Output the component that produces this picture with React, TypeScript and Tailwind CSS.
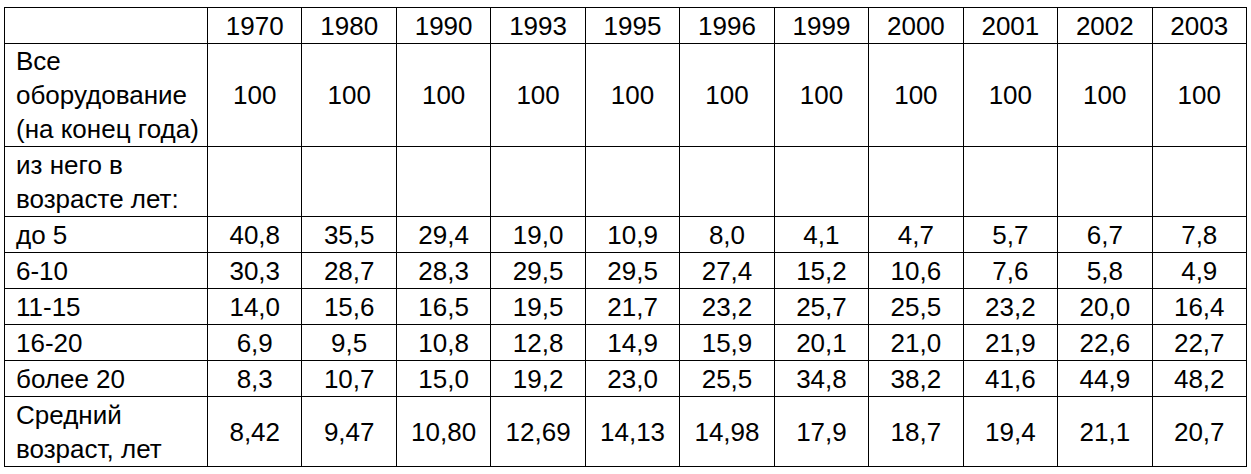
const years = ["1970", "1980", "1990", "1993", "1995", "1996", "1999", "2000", "2001", "2002", "2003"];

const rows: { label: string[]; values: string[]; h: string }[] = [
  { label: ["Все", "оборудование", "(на конец года)"], values: Array(11).fill("100"), h: "h-[103px]" },
  { label: ["из него в", "возрасте лет:"], values: Array(11).fill(""), h: "h-[70px]" },
  { label: ["до 5"], values: ["40,8", "35,5", "29,4", "19,0", "10,9", "8,0", "4,1", "4,7", "5,7", "6,7", "7,8"], h: "h-[36px]" },
  { label: ["6-10"], values: ["30,3", "28,7", "28,3", "29,5", "29,5", "27,4", "15,2", "10,6", "7,6", "5,8", "4,9"], h: "h-[36px]" },
  { label: ["11-15"], values: ["14,0", "15,6", "16,5", "19,5", "21,7", "23,2", "25,7", "25,5", "23,2", "20,0", "16,4"], h: "h-[36px]" },
  { label: ["16-20"], values: ["6,9", "9,5", "10,8", "12,8", "14,9", "15,9", "20,1", "21,0", "21,9", "22,6", "22,7"], h: "h-[36px]" },
  { label: ["более 20"], values: ["8,3", "10,7", "15,0", "19,2", "23,0", "25,5", "34,8", "38,2", "41,6", "44,9", "48,2"], h: "h-[36px]" },
  { label: ["Средний", "возраст, лет"], values: ["8,42", "9,47", "10,80", "12,69", "14,13", "14,98", "17,9", "18,7", "19,4", "21,1", "20,7"], h: "h-[70px]" },
];

export default function App() {
  return (
    <div className="w-[1251px] h-[474px] bg-white pt-[7px] pl-[4px] font-['Liberation_Sans',Arial,sans-serif] text-[26px] text-black">
      <table className="border-collapse table-fixed w-[1243px]">
        <colgroup>
          <col className="w-[203px]" />
          {years.map((y) => (
            <col key={y} />
          ))}
        </colgroup>
        <tbody>
          <tr className="h-[36px]">
            <td className="border border-black"></td>
            {years.map((y) => (
              <td key={y} className="border border-black text-center leading-[34px] p-0">
                {y}
              </td>
            ))}
          </tr>
          {rows.map((r) => (
            <tr key={r.label.join(" ")} className={r.h}>
              <td className="border border-black pl-[11px] p-0 leading-[34px] align-middle whitespace-nowrap">
                {r.label.map((l) => (
                  <div key={l}>{l}</div>
                ))}
              </td>
              {r.values.map((v, i) => (
                <td key={i} className="border border-black text-center p-0 leading-[34px] align-middle">
                  {v}
                </td>
              ))}
            </tr>
          ))}
        </tbody>
      </table>
    </div>
  );
}
